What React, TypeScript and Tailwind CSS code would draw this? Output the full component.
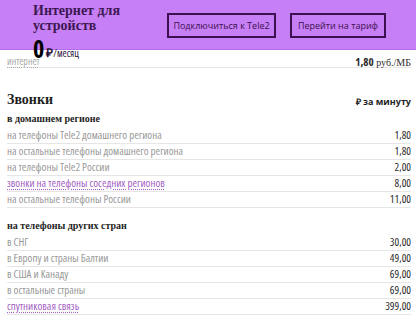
import React from "react";

const serif = { fontFamily: '"Liberation Serif", "DejaVu Serif", serif' };

interface Row {
  label: string;
  price: string;
  link?: boolean;
}

const homeRows: Row[] = [
  { label: "на телефоны Tele2 домашнего региона", price: "1,80" },
  { label: "на остальные телефоны домашнего региона", price: "1,80" },
  { label: "на телефоны Tele2 России", price: "2,00" },
  { label: "звонки на телефоны соседних регионов", price: "8,00", link: true },
  { label: "на остальные телефоны России", price: "11,00" },
];

const abroadRows: Row[] = [
  { label: "в СНГ", price: "30,00" },
  { label: "в Европу и страны Балтии", price: "49,00" },
  { label: "в США и Канаду", price: "69,00" },
  { label: "в остальные страны", price: "69,00" },
  { label: "спутниковая связь", price: "399,00", link: true },
];

function PriceRow({ row }: { row: Row }) {
  return (
    <div className="flex items-center justify-between h-[16px] border-b border-[#e6e6e6] text-[11px] font-stretch-[80%]">
      <span
        className={
          row.link
            ? "text-[#a35fc4] underline decoration-dotted underline-offset-2"
            : "text-[#999999]"
        }
      >
        {row.label}
      </span>
      <span className="text-[#2b2b2b] font-stretch-[75%]">{row.price}</span>
    </div>
  );
}

export default function App() {
  return (
    <div
      className="w-[416px] h-[320px] bg-white overflow-hidden"
      style={{ fontFamily: '"Open Sans", "Liberation Sans", sans-serif' }}
    >
      {/* Header */}
      <div className="relative h-[50px] bg-[#c67ff4] border-b border-[#b56ee6] flex items-start pl-[33px] pr-[30px]">
        <div className="flex flex-col">
          <h1
            className="text-[14px] font-bold leading-[15px] text-[#3d1752] pt-[3px]"
            style={serif}
          >
            Интернет для
            <br />
            устройств
          </h1>
          <div className="flex items-end mt-[5px] h-[20px] relative z-10 font-stretch-[75%]">
            <span className="text-[24px] font-bold leading-[19px] text-black">0</span>
            <span className="text-[12px] font-bold text-[#2a1038] leading-[11px] ml-[2px]">
              ₽
            </span>
            <span className="text-[10px] text-[#2a1038] leading-[10px]">/месяц</span>
          </div>
        </div>
        <div className="ml-auto flex gap-[14px] mt-[13px]">
          <button className="h-[25px] w-[109px] border-2 border-[#3d1050] text-[9px] text-[#3d1050]">
            Подключиться к Tele2
          </button>
          <button className="h-[25px] w-[96px] border-2 border-[#3d1050] text-[9px] text-[#3d1050]">
            Перейти на тариф
          </button>
        </div>
      </div>

      <div className="pl-[7px] pr-[5px]">
        {/* Internet row */}
        <div className="flex items-center justify-between h-[18px] pt-[6px] border-b border-[#e6e6e6]">
          <span className="text-[10px] leading-[11px] font-stretch-[75%] text-[#a9a9a9] underline decoration-dotted underline-offset-2">
            интернет
          </span>
          <span className="text-[10px] leading-[11px] text-[#2b2b2b]">
            <span className="font-bold font-stretch-[75%] text-[11px]">1,80</span>{" "}
            <span style={serif}>руб./МБ</span>
          </span>
        </div>

        {/* Calls */}
        <div className="flex items-end justify-between mt-[24px]">
          <h2 className="text-[14px] font-bold text-[#1e1e1e] leading-[16px]" style={serif}>
            Звонки
          </h2>
          <span className="text-[9px] font-bold text-[#1e1e1e]">₽ за минуту</span>
        </div>

        <h3 className="text-[10px] font-bold text-[#1e1e1e] mt-[4px] leading-[14px]" style={serif}>
          в домашнем регионе
        </h3>
        <div className="mt-[2px]">
          {homeRows.map((r) => (
            <PriceRow key={r.label} row={r} />
          ))}
        </div>

        <h3 className="text-[10px] font-bold text-[#1e1e1e] mt-[11px] leading-[14px]" style={serif}>
          на телефоны других стран
        </h3>
        <div className="mt-[2px]">
          {abroadRows.map((r) => (
            <PriceRow key={r.label} row={r} />
          ))}
        </div>
      </div>
    </div>
  );
}
